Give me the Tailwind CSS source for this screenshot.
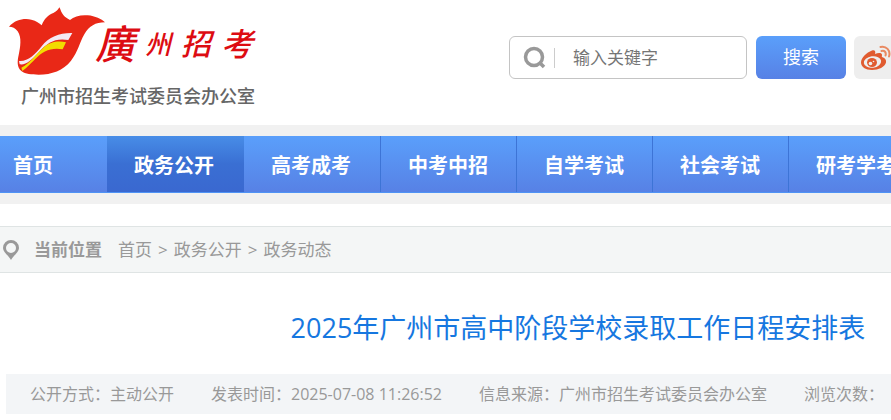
<!DOCTYPE html>
<html lang="zh-CN">
<head>
  <meta charset="UTF-8">
  <meta name="viewport" content="width=device-width, initial-scale=1.0">
  <script src="https://cdn.jsdelivr.net/npm/@tailwindcss/browser@4"></script>
  <title>2025年广州市高中阶段学校录取工作日程安排表</title>
</head>
<body class="bg-white overflow-x-hidden text-[17px] text-[#999] font-['Open_Sans','Noto_Sans_CJK_SC',sans-serif]">
  <!-- logo and search -->
  <header class="flex items-start h-[125px]">
    <a href="#" class="relative block shrink-0 w-[509px] h-[125px]">
      <svg class="block w-[110px] h-20" viewBox="0 0 330 240" aria-hidden="true">
        <path fill="#e92817" d="M27 80C45 59 73 54 94 59C109 62 118 70 125 76C132 57 145 44 160 39C169 35 174 30 178 22C184 32 184 48 210 60C222 49 243 44 263 46C286 48 304 57 315 67C286 67 268 78 253 103C239 127 234 156 213 182C190 211 155 224 116 224C94 224 76 222 65 214C50 202 52 183 56 165C61 142 66 112 53 94C46 84 37 80 27 80Z"/>
        <path fill="#f4eaf5" d="M57 183C82 186 104 165 125 139C147 110 180 98 217 99L205 120C166 113 142 128 117 156C94 181 78 196 59 193Z"/>
        <path fill="#f2dc00" d="M64 203C89 190 108 163 130 143C150 125 175 122 198 127L188 148C152 142 128 154 105 178C89 194 77 207 67 213Z"/>
      </svg>
      <span class="absolute left-[95px] top-6 flex items-center gap-[10px] italic font-medium text-[#dd0c12] leading-none">
        <span class="text-[40px]">廣</span>
        <span class="text-[26px]">州</span>
        <span class="text-[30px]">招</span>
        <span class="text-[32px]">考</span>
      </span>
      <span class="absolute left-[21px] top-[82px] text-[18px] leading-7 font-medium text-[#666] whitespace-nowrap">广州市招生考试委员会办公室</span>
    </a>
    <form class="flex shrink-0 pt-9">
      <label for="keyword" class="flex items-center w-[238px] h-[43px] border border-[#c4c4c4] rounded-md pl-3">
        <svg class="w-6 h-6" viewBox="0 0 24 24" fill="none" stroke="#999" stroke-width="3.5" aria-hidden="true">
          <circle cx="12" cy="11" r="8.5"/>
          <path d="M17.5 16.5l4.5 4.5"/>
        </svg>
        <span class="w-px h-5 bg-[#ccc] ml-2"></span>
        <input id="keyword" type="text" placeholder="输入关键字" aria-label="输入关键字" class="w-40 ml-[18px] outline-none placeholder:text-[#757575]">
      </label>
      <button type="button" class="w-[90px] h-[43px] ml-[9px] rounded-md bg-linear-to-b from-[#5a9ffb] to-[#5781e5] text-white text-[18px]">搜索</button>
      <a href="#" aria-label="微博" class="flex items-center w-[43px] h-[43px] ml-2 pl-[6px] rounded-md bg-[#eee]">
        <svg class="w-8 h-7 shrink-0" viewBox="0 0 32 28" fill="none" aria-hidden="true">
          <path fill="#e05b30" d="M12 6.500C14.500 5.500 16 7 15 10C18 8.700 22 8.500 22 11C22 12 21.300 12.700 22.500 13.300C25 14.200 26.500 16 26 18.500C25 23 18.500 26 12 26C5.500 26 1 23 1 18.500C1 14 6.500 8.500 12 6.500Z"/>
          <ellipse cx="12.500" cy="18" rx="8.700" ry="5.700" fill="#eee" transform="rotate(-8 12.500 18)"/>
          <ellipse cx="12" cy="18.500" rx="5" ry="4.500" fill="#e05b30"/>
          <circle cx="10.500" cy="19.500" r="1.800" fill="#eee"/>
          <circle cx="13.500" cy="17.500" r="0.800" fill="#eee"/>
          <path stroke="#e98a62" stroke-width="2" stroke-linecap="round" d="M20.500 3C26 1.500 31 6.500 29 12.500M21.500 7C24.500 6 26.500 8.500 25.500 11.500"/>
        </svg>
      </a>
    </form>
  </header>

  <!-- main menu -->
  <div class="bg-[#f1f1f1] py-[11px]">
    <nav class="flex h-[57px] overflow-hidden border-b border-[#4f93f5] bg-linear-to-b from-[#5a9ffb] to-[#5781e5] text-white text-[20px] font-bold leading-[59px] whitespace-nowrap">
      <a href="#" class="shrink-0 w-[107px] pl-[13px]">首页</a>
      <a href="#" class="shrink-0 w-[137px] pl-[27px] bg-linear-to-b from-[#488de7] via-[#3a6fd3] to-[#3a68d0]">政务公开</a>
      <a href="#" class="shrink-0 w-[136px] pl-[27px]">高考成考</a>
      <a href="#" class="shrink-0 w-[136px] pl-[27px] border-l border-[#3d74d6]">中考中招</a>
      <a href="#" class="shrink-0 w-[136px] pl-[27px] border-l border-[#3d74d6]">自学考试</a>
      <a href="#" class="shrink-0 w-[136px] pl-[27px] border-l border-[#3d74d6]">社会考试</a>
      <a href="#" class="shrink-0 w-[136px] pl-[27px] border-l border-[#3d74d6]">研考学考</a>
    </nav>
  </div>

  <!-- breadcrumb -->
  <div class="flex items-center h-[47px] mt-[22px] pl-[2px] bg-[#f4f6f6] border-y border-[#dfe4e4]">
    <svg class="w-[18px] h-5" viewBox="0 0 18 20" aria-hidden="true">
      <path fill="#999" fill-rule="evenodd" d="M9 0A8 8 0 0 0 1 8C1 12 6 15 9 20C12 15 17 12 17 8A8 8 0 0 0 9 0ZM9 3A5 5 0 1 1 9 13A5 5 0 1 1 9 3Z"/>
    </svg>
    <strong class="ml-[14px]">当前位置</strong>
    <div class="flex gap-[6px] ml-4">
      <a href="#">首页</a>
      <span>&gt;</span>
      <a href="#">政务公开</a>
      <span>&gt;</span>
      <a href="#">政务动态</a>
    </div>
  </div>

  <!-- article -->
  <main class="w-[1144px] ml-[6px]">
    <h1 class="pt-[35px] pb-[26px] text-center text-[27px] leading-10 text-[#1677e0]">2025年广州市高中阶段学校录取工作日程安排表</h1>
    <div class="flex items-center gap-[37px] h-10 pl-6 bg-[#f3f5f7] text-[16px] whitespace-nowrap">
      <span>公开方式：主动公开</span>
      <span>发表时间：2025-07-08 11:26:52</span>
      <span>信息来源：广州市招生考试委员会办公室</span>
      <span>浏览次数：</span>
    </div>
  </main>
</body>
</html>
